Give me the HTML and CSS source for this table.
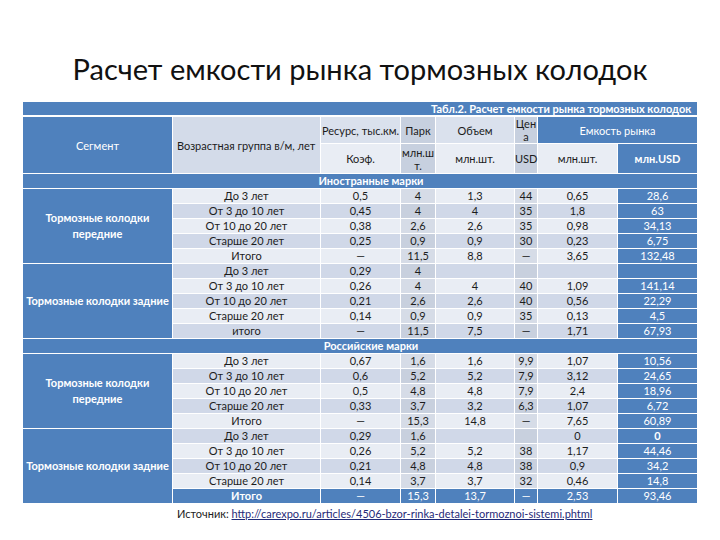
FILE: index.html
```html
<!DOCTYPE html>
<html lang="ru">
<head>
<meta charset="utf-8">
<title>Расчет емкости рынка тормозных колодок</title>
<link rel="stylesheet" href="styles.css">
</head>
<body>
<div class="page">
  <h1 class="title">Расчет емкости рынка тормозных колодок</h1>
  <table class="tbl">
    <colgroup>
      <col class="c-seg"><col class="c-age"><col class="c-res"><col class="c-park"><col class="c-vol"><col class="c-price"><col class="c-cap1"><col class="c-cap2">
    </colgroup>
    <tr class="r-cap"><td colspan="8" class="cap"><div class="cap-in">Табл.2. Расчет емкости рынка тормозных колодок</div></td></tr>
    <tr class="r-h1">
      <td rowspan="2" class="seg-h">Сегмент</td>
      <td rowspan="2" class="age-h">Возрастная группа в/м, лет</td>
      <td class="h-lt">Ресурс, тыс.км.</td>
      <td class="h-dk">Парк</td>
      <td class="h-lt">Объем</td>
      <td class="h-dk">Цен<br>а</td>
      <td colspan="2" class="blue">Емкость рынка</td>
    </tr>
    <tr class="r-h2">
      <td class="h-pale">Коэф.</td>
      <td class="h-dk">млн.ш<br>т.</td>
      <td class="h-pale">млн.шт.</td>
      <td class="h-dk">USD</td>
      <td class="h-pale">млн.шт.</td>
      <td class="blue bold">млн.USD</td>
    </tr>
    <tr class="r-sec"><td colspan="8" class="sec">Иностранные марки</td></tr>
    <tr class="lt"><td rowspan="5" class="seg">Тормозные колодки<br>передние</td><td>До 3 лет</td><td>0,5</td><td class="g">4</td><td>1,3</td><td class="g">44</td><td>0,65</td><td class="usd">28,6</td></tr>
    <tr class="dk"><td>От 3 до 10 лет</td><td>0,45</td><td class="g">4</td><td>4</td><td class="g">35</td><td>1,8</td><td class="usd">63</td></tr>
    <tr class="lt"><td>От 10 до 20 лет</td><td>0,38</td><td class="g">2,6</td><td>2,6</td><td class="g">35</td><td>0,98</td><td class="usd">34,13</td></tr>
    <tr class="dk"><td>Старше 20 лет</td><td>0,25</td><td class="g">0,9</td><td>0,9</td><td class="g">30</td><td>0,23</td><td class="usd">6,75</td></tr>
    <tr class="lt"><td>Итого</td><td>—</td><td class="g">11,5</td><td>8,8</td><td class="g">—</td><td>3,65</td><td class="usd">132,48</td></tr>
    <tr class="dk"><td rowspan="5" class="seg nw">Тормозные колодки задние</td><td>До 3 лет</td><td>0,29</td><td class="g">4</td><td></td><td class="g"></td><td></td><td class="usd"></td></tr>
    <tr class="lt"><td>От 3 до 10 лет</td><td>0,26</td><td class="g">4</td><td>4</td><td class="g">40</td><td>1,09</td><td class="usd">141,14</td></tr>
    <tr class="dk"><td>От 10 до 20 лет</td><td>0,21</td><td class="g">2,6</td><td>2,6</td><td class="g">40</td><td>0,56</td><td class="usd">22,29</td></tr>
    <tr class="lt"><td>Старше 20 лет</td><td>0,14</td><td class="g">0,9</td><td>0,9</td><td class="g">35</td><td>0,13</td><td class="usd">4,5</td></tr>
    <tr class="dk"><td>итого</td><td>—</td><td class="g">11,5</td><td>7,5</td><td class="g">—</td><td>1,71</td><td class="usd">67,93</td></tr>
    <tr class="r-sec"><td colspan="8" class="sec">Российские марки</td></tr>
    <tr class="lt"><td rowspan="5" class="seg">Тормозные колодки<br>передние</td><td>До 3 лет</td><td>0,67</td><td class="g">1,6</td><td>1,6</td><td class="g">9,9</td><td>1,07</td><td class="usd">10,56</td></tr>
    <tr class="dk"><td>От 3 до 10 лет</td><td>0,6</td><td class="g">5,2</td><td>5,2</td><td class="g">7,9</td><td>3,12</td><td class="usd">24,65</td></tr>
    <tr class="lt"><td>От 10 до 20 лет</td><td>0,5</td><td class="g">4,8</td><td>4,8</td><td class="g">7,9</td><td>2,4</td><td class="usd">18,96</td></tr>
    <tr class="dk"><td>Старше 20 лет</td><td>0,33</td><td class="g">3,7</td><td>3,2</td><td class="g">6,3</td><td>1,07</td><td class="usd">6,72</td></tr>
    <tr class="lt"><td>Итого</td><td>—</td><td class="g">15,3</td><td>14,8</td><td class="g">—</td><td>7,65</td><td class="usd">60,89</td></tr>
    <tr class="dk"><td rowspan="5" class="seg nw">Тормозные колодки задние</td><td>До 3 лет</td><td>0,29</td><td class="g">1,6</td><td></td><td class="g"></td><td>0</td><td class="usd bold">0</td></tr>
    <tr class="lt"><td>От 3 до 10 лет</td><td>0,26</td><td class="g">5,2</td><td>5,2</td><td class="g">38</td><td>1,17</td><td class="usd">44,46</td></tr>
    <tr class="dk"><td>От 10 до 20 лет</td><td>0,21</td><td class="g">4,8</td><td>4,8</td><td class="g">38</td><td>0,9</td><td class="usd">34,2</td></tr>
    <tr class="lt"><td>Старше 20 лет</td><td>0,14</td><td class="g">3,7</td><td>3,7</td><td class="g">32</td><td>0,46</td><td class="usd">14,8</td></tr>
    <tr class="tot"><td class="bold">Итого</td><td>—</td><td>15,3</td><td>13,7</td><td>—</td><td>2,53</td><td>93,46</td></tr>
  </table>
  <p class="src">Источник: <a class="src-link" href="#">http://carexpo.ru/articles/4506-bzor-rinka-detalei-tormoznoi-sistemi.phtml</a></p>
</div>
</body>
</html>
```

FILE: styles.css
```css
html, body {
  margin: 0;
  padding: 0;
  background: #ffffff;
}
.page {
  width: 720px;
  height: 540px;
  overflow: hidden;
  font-family: Lato, "Liberation Sans", sans-serif;
  color: #1c1c1c;
}
.title {
  margin: 0;
  padding-top: 49px;
  height: 40px;
  line-height: 40px;
  text-align: center;
  font-family: Lato, "Liberation Sans", sans-serif;
  font-weight: 400;
  font-size: 29px;
  color: #111111;
}
.tbl {
  margin: 12px 0 0 22px;
  width: 675px;
  table-layout: fixed;
  border-collapse: collapse;
  font-size: 11px;
}
.c-seg { width: 150px; }
.c-age { width: 148px; }
.c-res { width: 80px; }
.c-park { width: 35px; }
.c-vol { width: 79px; }
.c-price { width: 23px; }
.c-cap1 { width: 80px; }
.c-cap2 { width: 80px; }
.tbl td {
  border: 1px solid #ffffff;
  padding: 0;
  text-align: center;
  vertical-align: middle;
  line-height: 14px;
  height: 14px;
  white-space: nowrap;
}
.tbl tr.r-cap td {
  height: 13px;
  line-height: 13px;
  border-bottom: 2px solid #ffffff;
}
.cap {
  background: #4f81bd;
  color: #ffffff;
  font-weight: 700;
  font-size: 11px;
}
.cap-in {
  width: 675px;
  overflow: hidden;
  white-space: nowrap;
  text-align: left;
  padding-left: 408px;
  box-sizing: border-box;
}
.tbl tr.r-h1 td { height: 26px; line-height: 13px; }
.tbl tr.r-h2 td { height: 29px; line-height: 13px; }
.seg-h {
  background: #4f81bd;
  color: #ffffff;
}
.age-h {
  background: #d3dbe9;
  text-align: left !important;
  padding-left: 4px !important;
}
.h-lt { background: #dae1ed; }
.h-dk { background: #c7d0df; }
.h-pale { background: #e9edf4; }
.blue {
  background: #4f81bd;
  color: #ffffff;
}
.bold { font-weight: 700; }
.sec {
  background: #4f81bd;
  color: #ffffff;
  font-weight: 700;
  padding-left: 22px !important;
}
.seg {
  background: #4f81bd;
  color: #ffffff;
  font-weight: 700;
  line-height: 16px !important;
}
.nw { white-space: nowrap; }
tr.lt td { background: #e9edf4; }
tr.dk td { background: #d0d8e8; }
tr.lt td.g { background: #d6dce7; }
tr.dk td.g { background: #c8d0de; }
tr.lt td.seg, tr.dk td.seg { background: #4f81bd; }
tr.lt td.usd, tr.dk td.usd {
  background: #4f81bd;
  color: #ffffff;
}
tr.tot td {
  background: #4f81bd;
  color: #ffffff;
}
.src {
  margin: 3px 0 0 177px;
  font-size: 11px;
  line-height: 14px;
  color: #1c1c1c;
}
.src-link {
  color: #1f2a78;
  text-decoration: underline;
}
```
